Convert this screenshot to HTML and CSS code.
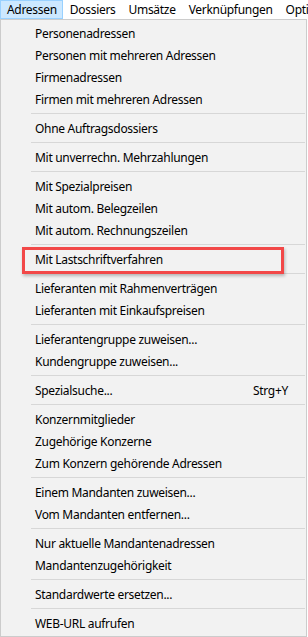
FILE: index.html
```html
<!DOCTYPE html>
<html lang="de">
<head>
    <meta charset="UTF-8">
    <meta name="viewport" content="width=device-width, initial-scale=1.0">
    <title>Adressen</title>
    <link rel="stylesheet" href="styles.css">
</head>
<body>
    <div class="menubar">
        <span class="menubar-item active">Adressen</span>
        <span class="menubar-item">Dossiers</span>
        <span class="menubar-item">Umsätze</span>
        <span class="menubar-item">Verknüpfungen</span>
        <span class="menubar-item">Optionen</span>
    </div>
    <div class="menu">
        <div class="item">Personenadressen</div>
        <div class="item">Personen mit mehreren Adressen</div>
        <div class="item">Firmenadressen</div>
        <div class="item">Firmen mit mehreren Adressen</div>
        <div class="separator"></div>
        <div class="item">Ohne Auftragsdossiers</div>
        <div class="separator"></div>
        <div class="item">Mit unverrechn. Mehrzahlungen</div>
        <div class="separator"></div>
        <div class="item">Mit Spezialpreisen</div>
        <div class="item">Mit autom. Belegzeilen</div>
        <div class="item">Mit autom. Rechnungszeilen</div>
        <div class="separator"></div>
        <div class="item marked">Mit Lastschriftverfahren<span class="highlight-box"></span></div>
        <div class="separator"></div>
        <div class="item">Lieferanten mit Rahmenverträgen</div>
        <div class="item">Lieferanten mit Einkaufspreisen</div>
        <div class="separator"></div>
        <div class="item">Lieferantengruppe zuweisen...</div>
        <div class="item">Kundengruppe zuweisen...</div>
        <div class="separator"></div>
        <div class="item">Spezialsuche...<span class="shortcut">Strg+Y</span></div>
        <div class="separator"></div>
        <div class="item">Konzernmitglieder</div>
        <div class="item">Zugehörige Konzerne</div>
        <div class="item">Zum Konzern gehörende Adressen</div>
        <div class="separator"></div>
        <div class="item">Einem Mandanten zuweisen...</div>
        <div class="item">Vom Mandanten entfernen...</div>
        <div class="separator"></div>
        <div class="item">Nur aktuelle Mandantenadressen</div>
        <div class="item">Mandantenzugehörigkeit</div>
        <div class="separator"></div>
        <div class="item">Standardwerte ersetzen...</div>
        <div class="separator"></div>
        <div class="item">WEB-URL aufrufen</div>
    </div>
</body>
</html>
```

FILE: styles.css
```css
body {
    margin: 0;
    padding: 0;
    width: 308px;
    height: 637px;
    overflow: hidden;
    background-color: #ffffff;
    font-family: 'Segoe UI', 'Noto Sans', sans-serif;
    font-size: 12px;
    letter-spacing: -0.3px;
    color: #000;
}

.menubar {
    display: flex;
    height: 19px;
    overflow: hidden;
    white-space: nowrap;
    background-color: #fff;
}

.menubar-item {
    display: flex;
    align-items: center;
    padding: 0 5px 0 6px;
    border: 1px solid transparent;
    box-sizing: border-box;
    height: 19px;
}

.menubar-item.active {
    background-color: #cce8ff;
    border-color: #99d1ff;
}

.menu {
    width: 307px;
    height: 618px;
    box-sizing: border-box;
    border: 1px solid #cccccc;
    background-color: #f2f2f2;
    padding: 2px 0;
}

.item {
    position: relative;
    display: flex;
    align-items: center;
    height: 22px;
    padding-left: 34px;
    padding-right: 18px;
    white-space: nowrap;
}

.shortcut {
    margin-left: auto;
}

.separator {
    height: 1px;
    margin: 3px 1px 3px 30px;
    background-color: #d7d7d7;
}

.highlight-box {
    position: absolute;
    left: 21px;
    top: -1px;
    width: 262px;
    height: 27px;
    box-sizing: border-box;
    border: 3px solid #f24848;
    box-shadow: 1px 2px 3px rgba(0, 0, 0, 0.25);
}
```
